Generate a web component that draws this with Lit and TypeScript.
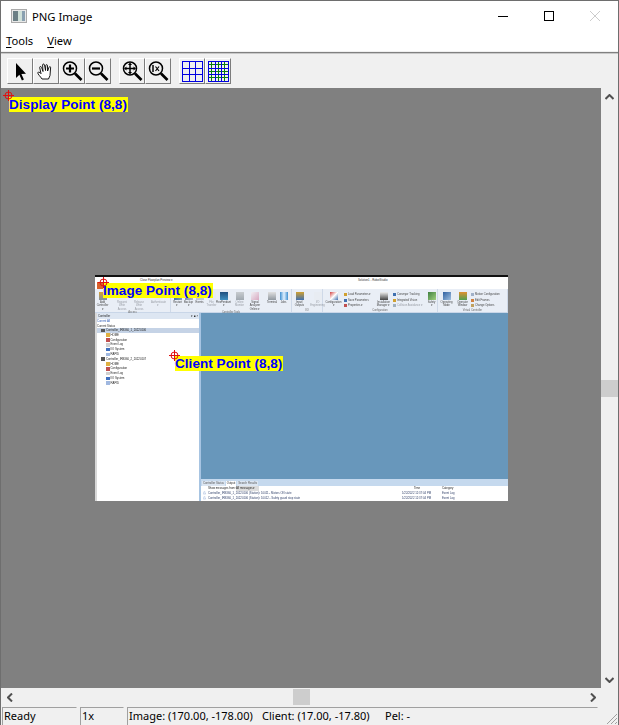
import { LitElement, html, css, svg } from 'lit';
import { customElement } from 'lit/decorators.js';

const magnifier = (inner: unknown) => svg`
  <circle cx="10" cy="9.500" r="6.500" fill="none" stroke="#000" stroke-width="1.500"/>
  <path d="M15 14.500l6.500 6.500" stroke="#000" stroke-width="2.600" fill="none"/>
  ${inner}`;

const grid = (dense: boolean) => {
  const lines = [];
  if (dense) {
    for (const p of [3.5, 10.5, 16.5]) {
      lines.push(svg`<path d="M${p} 0v21M0 ${p}h21" stroke="#0a7d0a"/>`);
    }
  }
  for (const p of [0.5, 7.5, 13.5, 20.5]) {
    lines.push(svg`<path d="M${p} 0v21M0 ${p}h21" stroke="#0000e0"/>`);
  }
  return lines;
};

const toolIcons = [
  svg`<path d="M8 4v15l3.400-3.200 2.500 5.600 2-.9-2.500-5.400 4.600-.3z" fill="#000"/>`,
  svg`<path d="M8 20c-1.500-2.500-4.500-5-4.200-6.300.4-1.200 1.900-.6 3.200 1L5.700 8.500c0-1.300 1.500-1.300 1.900 0L9 12.500 8.600 6c0-1.300 1.700-1.300 1.900 0l1 5.500.3-5c.2-1.300 1.700-1.100 1.700.2l.1 5.300 1.500-3.800c.4-1.100 1.700-.7 1.500.5L16 16.500 14.500 20z" fill="#fff" stroke="#000" stroke-width="0.900"/>`,
  magnifier(svg`<path d="M6 9.500h8M10 5.500v8" stroke="#000" stroke-width="2.200"/>`),
  magnifier(svg`<path d="M6 9.500h8" stroke="#000" stroke-width="2.200"/>`),
];
const zoomIcons = [
  magnifier(svg`<path d="M5.500 9.500h9M10 5v9" stroke="#000" stroke-width="1.500"/><path d="M10 3.500l2 2.500H8zM10 15.500l2-2.500H8zM4 9.500l2.500-2v4zM16 9.500l-2.500-2v4z" fill="#000"/>`),
  magnifier(svg`<path d="M7 6v7" stroke="#000" stroke-width="1.500"/><path d="M9.500 7.500l3.500 4.500M13 7.500L9.500 12" stroke="#000" stroke-width="1.200"/>`),
];

interface RibbonItem {
  label: string;
  width: number;
  gap: number;
  fill: string;
  dim?: boolean;
}

const accessItems: RibbonItem[] = [
  { label: 'Add\nController ▾', width: 11, gap: 2, fill: 'linear-gradient(#d8a030,#8090a0)' },
  { label: 'Request\nWrite Access', width: 14, gap: 7, fill: '#e8ecf2', dim: true },
  { label: 'Release\nWrite Access', width: 14, gap: 3, fill: '#e8ecf2', dim: true },
  { label: 'Authenticate\n▾', width: 15, gap: 5, fill: '#e8ecf2', dim: true },
];
const toolItems: RibbonItem[] = [
  { label: 'Restart\n▾', width: 9, gap: 2, fill: 'linear-gradient(90deg,#3f6f9f,#7fa0c0)' },
  { label: 'Backup\n▾', width: 9, gap: 2, fill: 'linear-gradient(90deg,#8090a8,#b0b8c4)' },
  { label: 'Events', width: 9, gap: 2, fill: '#c0c8d8' },
  { label: 'File\nTransfer', width: 9, gap: 3, fill: '#e8ecf2', dim: true },
  { label: 'FlexPendant\n▾', width: 15, gap: 0, fill: 'linear-gradient(#1f4f7f,#3f8fc0)' },
  { label: 'Online\nMonitor', width: 11, gap: 3, fill: 'linear-gradient(#c8ccd0,#a0a8b0)', dim: true },
  { label: 'Signal Analyzer\nOnline ▾', width: 18, gap: 1, fill: 'linear-gradient(135deg,#f0f0f4,#d8a8c0)' },
  { label: 'Terminal', width: 10, gap: 3, fill: 'linear-gradient(#e0e0e0,#9098a0)' },
  { label: 'Jobs', width: 7, gap: 3, fill: 'linear-gradient(90deg,#3f8fd0,#e0f0ff,#3f8fd0)' },
];
const ioItems: RibbonItem[] = [
  { label: 'Input/\nOutputs', width: 11, gap: 2, fill: 'linear-gradient(#d0a030,#4070b0)' },
  { label: 'I/O\nEngineering', width: 13, gap: 6, fill: '#e8ecf2', dim: true },
];
const operatorItems: RibbonItem[] = [
  { label: 'Operating\nMode', width: 13, gap: 2, fill: 'linear-gradient(135deg,#3060a0,#a0c0e0)' },
  { label: 'Operator\nWindow', width: 13, gap: 3, fill: 'linear-gradient(#e09030,#50a050)' },
];

const treeChildren = [
  ['HOME', '#e0b040'],
  ['Configuration', '#c05050'],
  ['Event Log', '#d0d0d0'],
  ['I/O System', '#4070c0'],
  ['RAPID', '#a0b8e0'],
];

@customElement('app-root')
export class AppRoot extends LitElement {
  static styles = css`
    :host {
      display: block;
      width: 619px;
      height: 725px;
      font-family: 'Noto Sans', sans-serif;
      color: #000;
      overflow: hidden;
    }
    .win {
      height: 725px;
      box-sizing: border-box;
      border: 1px solid #6e6e6e;
      border-bottom: 0;
      display: flex;
      flex-direction: column;
      background: #f0f0f0;
    }
    .title {
      height: 30px;
      background: #fff;
      display: flex;
      align-items: center;
      flex: none;
    }
    .app-icon { margin-left: 10px; }
    .title-text { margin-left: 5px; font-size: 11.250px; }
    .caption { margin-left: auto; display: flex; }
    .cap-btn { width: 46px; height: 30px; display: flex; align-items: center; justify-content: center; }
    .menu {
      height: 20px;
      background: #fff;
      display: flex;
      gap: 14px;
      padding: 0 0 2px 5px;
      box-sizing: border-box;
      align-items: center;
      font-size: 11.200px;
      flex: none;
    }
    .menu u { text-underline-offset: 2px; }
    .rule { height: 1px; border-bottom: 1px solid #808080; flex: none; }
    .toolbar {
      height: 35px;
      flex: none;
      box-sizing: border-box;
      border-top: 1px solid #c8c8c8;
      display: flex;
      align-items: center;
      padding-left: 6px;
      gap: 8px;
    }
    .group { display: flex; }
    .tbtn {
      width: 26px;
      height: 26px;
      box-sizing: border-box;
      border-top: 1px solid #fff;
      border-left: 1px solid #fff;
      border-right: 1px solid #7c7c7c;
      border-bottom: 1px solid #7c7c7c;
      display: flex;
      align-items: center;
      justify-content: center;
    }
    .main { flex: 1; display: flex; min-height: 0; }
    .canvas { flex: 1; background: #808080; position: relative; overflow: hidden; }
    .vbar {
      width: 17px;
      background: #f0f0f0;
      flex: none;
      display: flex;
      flex-direction: column;
      align-items: center;
      justify-content: space-between;
      position: relative;
    }
    .arrow { height: 17px; width: 17px; display: flex; align-items: center; justify-content: center; }
    .vthumb { position: absolute; left: 0; top: 292px; width: 17px; height: 17px; background: #cdcdcd; }
    .hbar {
      height: 18px;
      flex: none;
      background: #f0f0f0;
      display: flex;
      justify-content: space-between;
      align-items: center;
      position: relative;
      margin-right: 17px;
    }
    .hthumb { position: absolute; left: 292px; top: 1px; width: 17px; height: 16px; background: #cdcdcd; }
    .status {
      height: 19px;
      flex: none;
      display: flex;
      gap: 3px;
      padding: 1px 0 0 1px;
      box-sizing: border-box;
      font-size: 11px;
      position: relative;
    }
    .pane {
      border: 1px solid #a0a0a0;
      border-right-color: #f0f0f0;
      border-bottom: 0;
      padding: 0 1px;
      box-sizing: border-box;
      display: flex;
      line-height: 16px;
      white-space: nowrap;
    }
    .pane .image { width: 133px; }
    .pane .client { width: 123px; }
    .grip { position: absolute; right: 0; bottom: 0; }

    .tag {
      position: absolute;
      background: #ffff00;
      color: #0000ff;
      font: bold 13.500px/15px 'Liberation Sans', sans-serif;
      white-space: nowrap;
      z-index: 3;
      letter-spacing: 0.050px;
      padding-right: 1px;
    }
    .cross { position: absolute; z-index: 4; }

    .shot {
      position: absolute;
      left: 94px;
      top: 187px;
      width: 413px;
      height: 226px;
      background: #fff;
      border-top: 2px solid #111;
      box-sizing: border-box;
      overflow: hidden;
      font: 2.800px/5px 'Liberation Sans', sans-serif;
      color: #333;
      white-space: nowrap;
    }
    .inner { filter: blur(0.25px); display: flex; flex-direction: column; height: 100%; }
    .qat { height: 12px; flex: none; position: relative; display: flex; background: #fff; padding-top: 1px; box-sizing: border-box; }
    .qat .q { margin-left: 45px; width: 218px; }
    .file-tab { position: absolute; left: 2px; bottom: 0; width: 7px; height: 7px; background: #d8602a; }
    .ribbon {
      height: 24px;
      flex: none;
      background: #e9eef6;
      border-bottom: 1px solid #c9d6e8;
      display: flex;
      box-sizing: border-box;
    }
    .rgroup {
      border-right: 1px solid #cfd9e8;
      display: flex;
      flex-direction: column;
      align-items: center;
      justify-content: space-between;
      flex: none;
      box-sizing: border-box;
      padding-top: 3px;
      color: #444;
    }
    .ritems { display: flex; align-self: stretch; }
    .ritem {
      display: flex;
      flex-direction: column;
      align-items: center;
      text-align: center;
      line-height: 3.400px;
      font-size: 2.700px;
      white-space: pre-line;
      flex: none;
    }
    .ritem.dim { color: #989ca4; }
    .ico { width: 8px; height: 8px; margin-bottom: 1px; flex: none; }
    .rcol { display: flex; flex-direction: column; font-size: 2.700px; line-height: 5.500px; flex: none; }
    .rline { display: flex; align-items: center; gap: 1px; }
    .rline.dim { color: #989ca4; }
    .mini { width: 3px; height: 3px; flex: none; }
    .rcap { font-size: 2.600px; line-height: 3.500px; color: #666; }
    .body { flex: 1; display: flex; min-height: 0; }
    .tree {
      width: 106px;
      background: #fff;
      border-left: 2px solid #d8d8d8;
      border-right: 2px solid #a7c4e2;
      flex: none;
      display: flex;
      flex-direction: column;
      box-sizing: border-box;
      color: #222;
    }
    .tree-head {
      height: 6px;
      background: #dde6f2;
      padding-left: 1px;
      line-height: 6px;
      display: flex;
      justify-content: space-between;
      flex: none;
    }
    .link { color: #2956b2; line-height: 5.500px; flex: none; }
    .state { line-height: 3.500px; flex: none; }
    .row { height: 4.800px; line-height: 4.800px; display: flex; align-items: center; gap: 1px; flex: none; }
    .row.sel { background: #c5d3e6; }
    .row.parent { padding-left: 4px; }
    .row.child { padding-left: 8.500px; }
    .sw { width: 4px; height: 3.500px; flex: none; }
    .right { flex: 1; display: flex; flex-direction: column; min-width: 0; }
    .blue { flex: 1; background: #6897bb; }
    .tabs { height: 7px; background: #c5d9ee; display: flex; gap: 1px; padding-left: 1px; align-items: flex-end; flex: none; }
    .tab { background: #dce6f2; padding: 0 1px; line-height: 5px; color: #555; }
    .tab.on { background: #fff; color: #222; }
    .out { height: 15px; background: #fff; flex: none; line-height: 5px; color: #2f3f68; overflow: hidden; }
    .filter { padding-left: 7px; color: #222; height: 5px; display: flex; }
    .filter span { width: 28px; flex: none; }
    .filter b { background: #ddd; font-weight: normal; width: 23px; flex: none; margin-right: 155px; }
    .filter .time { width: 28px; }
    .msg { display: flex; padding-left: 2px; }
    .msg i { width: 5px; font-style: normal; color: #3060b0; flex: none; }
    .msg .a { width: 194px; flex: none; }
    .msg .b { width: 40px; flex: none; }
  `;

  private tbtn(icon: unknown) {
    return html`<div class="tbtn"><svg width="24" height="24" viewBox="0 0 24 24">${icon}</svg></div>`;
  }

  private gridBtn(dense: boolean) {
    return html`<div class="tbtn"><svg width="21" height="21" viewBox="0 0 21 21">${grid(dense)}</svg></div>`;
  }

  private cross(x: number, y: number) {
    return html`<svg class="cross" style="left:${x}px;top:${y}px" width="11" height="11" viewBox="0 0 11 11">
      <circle cx="5.500" cy="5.500" r="3.500" fill="none" stroke="#e01010"/>
      <path d="M0 5.500h11M5.500 0v11" stroke="#e01010"/>
    </svg>`;
  }

  private ritem(item: RibbonItem) {
    return html`<div
      class="ritem ${item.dim ? 'dim' : ''}"
      style="width:${item.width}px;margin-left:${item.gap}px"
    ><div class="ico" style="background:${item.fill}"></div>${item.label}</div>`;
  }

  private rcol(gap: number, width: number, lines: [string, string, boolean?][]) {
    return html`<div class="rcol" style="width:${width}px;margin-left:${gap}px">
      ${lines.map(
        ([t, c, dim]) => html`<div class="rline ${dim ? 'dim' : ''}">
          <span class="mini" style="background:${c}"></span>${t}
        </div>`
      )}
    </div>`;
  }

  private treeGroup(name: string, selected: boolean) {
    return html`
      <div class="row parent ${selected ? 'sel' : ''}">
        <span class="sw" style="background:#555"></span>${name}
      </div>
      ${treeChildren.map(
        ([t, c]) => html`<div class="row child">
          <span class="sw" style="background:${c}"></span>${t}
        </div>`
      )}
    `;
  }

  private shot() {
    return html`<div class="shot"><div class="inner">
      <div class="qat">
        <span class="q">Close Floorplan Preview ▾</span>
        <span>Solution1 - RobotStudio</span>
        <div class="file-tab"></div>
      </div>
      <div class="ribbon">
        <div class="rgroup" style="width:76px">
          <div class="ritems">${accessItems.map((i) => this.ritem(i))}</div>
          <span class="rcap">Access</span>
        </div>
        <div class="rgroup" style="width:121px">
          <div class="ritems">${toolItems.map((i) => this.ritem(i))}</div>
          <span class="rcap">Controller Tools</span>
        </div>
        <div class="rgroup" style="width:31px">
          <div class="ritems">${ioItems.map((i) => this.ritem(i))}</div>
          <span class="rcap">I/O</span>
        </div>
        <div class="rgroup" style="width:115px">
          <div class="ritems">
            ${this.ritem({ label: 'Configuration\n▾', width: 17, gap: 2, fill: 'linear-gradient(135deg,#d04040,#fff,#4070b0)' })}
            ${this.rcol(2, 30, [
              ['Load Parameters ▾', '#d0a030'],
              ['Save Parameters', '#4070b0'],
              ['Properties ▾', '#c05050'],
            ])}
            ${this.ritem({ label: 'Installation\nManager ▾', width: 15, gap: 2, fill: 'linear-gradient(#f0f0f0,#444)' })}
            ${this.rcol(2, 33, [
              ['Conveyor Tracking', '#4070b0'],
              ['Integrated Vision', '#d0a030'],
              ['Collision Avoidance ▾', '#a0b0c0', true],
            ])}
            ${this.ritem({ label: 'Safety\n▾', width: 9, gap: 1, fill: 'linear-gradient(135deg,#408040,#a0d080)' })}
          </div>
          <span class="rcap">Configuration</span>
        </div>
        <div class="rgroup" style="width:70px">
          <div class="ritems">
            ${operatorItems.map((i) => this.ritem(i))}
            ${this.rcol(2, 35, [
              ['Motion Configuration', '#a0b0c8'],
              ['Edit Frames', '#d08040'],
              ['Change Options', '#c0a060'],
            ])}
          </div>
          <span class="rcap">Virtual Controller</span>
        </div>
      </div>
      <div class="body">
        <div class="tree">
          <div class="tree-head"><span>Controller</span><span>▾ ■ ×&nbsp;</span></div>
          <div class="link">Current All</div>
          <div class="state">Current Status</div>
          ${this.treeGroup('Controller_IRB360_1_20220106', true)}
          ${this.treeGroup('Controller_IRB360_2_20220107', false)}
        </div>
        <div class="right">
          <div class="blue"></div>
          <div class="tabs">
            <span class="tab">Controller Status</span>
            <span class="tab on">Output</span>
            <span class="tab">Search Results</span>
          </div>
          <div class="out">
            <div class="filter"><span>Show messages from:</span><b>All messages ▾</b><span class="time">Time</span>Category</div>
            <div class="msg"><i>ⓘ</i><span class="a">Controller_IRB360_1_20220106 (Station): 10011 - Motors ON state</span><span class="b">1/22/2022 12:37:04 PM</span>Event Log</div>
            <div class="msg"><i>ⓘ</i><span class="a">Controller_IRB360_1_20220106 (Station): 10012 - Safety guard stop state</span><span class="b">1/22/2022 12:37:04 PM</span>Event Log</div>
          </div>
        </div>
      </div>
    </div></div>`;
  }

  render() {
    return html`<div class="win">
      <div class="title">
        <svg class="app-icon" width="16" height="14" viewBox="0 0 16 14">
          <rect x="0.500" y="0.500" width="15" height="13" fill="#e8e8e8" stroke="#aaa"/>
          <rect x="2" y="2" width="5" height="10" fill="#6b7f85"/>
          <rect x="7" y="2" width="4" height="10" fill="#cfe0d8"/>
          <rect x="11" y="2" width="3" height="10" fill="#8aa0b0"/>
        </svg>
        <span class="title-text">PNG Image</span>
        <div class="caption">
          <div class="cap-btn"><svg width="10" height="10"><path d="M0 5.500h10" stroke="#000"/></svg></div>
          <div class="cap-btn"><svg width="10" height="10"><rect x="0.500" y="0.500" width="9" height="9" fill="none" stroke="#000"/></svg></div>
          <div class="cap-btn"><svg width="10" height="10"><path d="M0 0l10 10M10 0L0 10" stroke="#ccc"/></svg></div>
        </div>
      </div>
      <div class="menu"><span><u>T</u>ools</span><span><u>V</u>iew</span></div>
      <div class="rule"></div>
      <div class="toolbar">
        <div class="group">${toolIcons.map((i) => this.tbtn(i))}</div>
        <div class="group">${zoomIcons.map((i) => this.tbtn(i))}</div>
        <div class="group">${this.gridBtn(false)}${this.gridBtn(true)}</div>
      </div>
      <div class="main">
        <div class="canvas">
          ${this.shot()}
          ${this.cross(2, 2)}
          <div class="tag" style="left:8px;top:9px">Display Point (8,8)</div>
          ${this.cross(97, 189)}
          ${this.cross(168, 262)}
          <div class="tag" style="left:102px;top:195px">Image Point (8,8)</div>
          <div class="tag" style="left:174px;top:268px">Client Point (8,8)</div>
        </div>
        <div class="vbar">
          <div class="arrow"><svg width="9" height="6"><path d="M0.500 5L4.500 1l4 4" fill="none" stroke="#505050" stroke-width="2"/></svg></div>
          <div class="vthumb"></div>
          <div class="arrow"><svg width="9" height="6"><path d="M0.500 1l4 4 4-4" fill="none" stroke="#505050" stroke-width="2"/></svg></div>
        </div>
      </div>
      <div class="hbar">
        <div class="arrow"><svg width="6" height="9"><path d="M5 0.500L1 4.500l4 4" fill="none" stroke="#505050" stroke-width="2"/></svg></div>
        <div class="hthumb"></div>
        <div class="arrow"><svg width="6" height="9"><path d="M1 0.500l4 4-4 4" fill="none" stroke="#505050" stroke-width="2"/></svg></div>
      </div>
      <div class="status">
        <div class="pane" style="width:75px">Ready</div>
        <div class="pane" style="width:44px">1x</div>
        <div class="pane" style="width:471px"><span class="image">Image: (170.00, -178.00)</span><span class="client">Client: (17.00, -17.80)</span><span>Pel: -</span></div>
        <svg class="grip" width="13" height="13" viewBox="0 0 13 13"><path d="M12 2L2 12M12 6l-6 6M12 10l-2 2" stroke="#a0a0a0"/></svg>
      </div>
    </div>`;
  }
}
